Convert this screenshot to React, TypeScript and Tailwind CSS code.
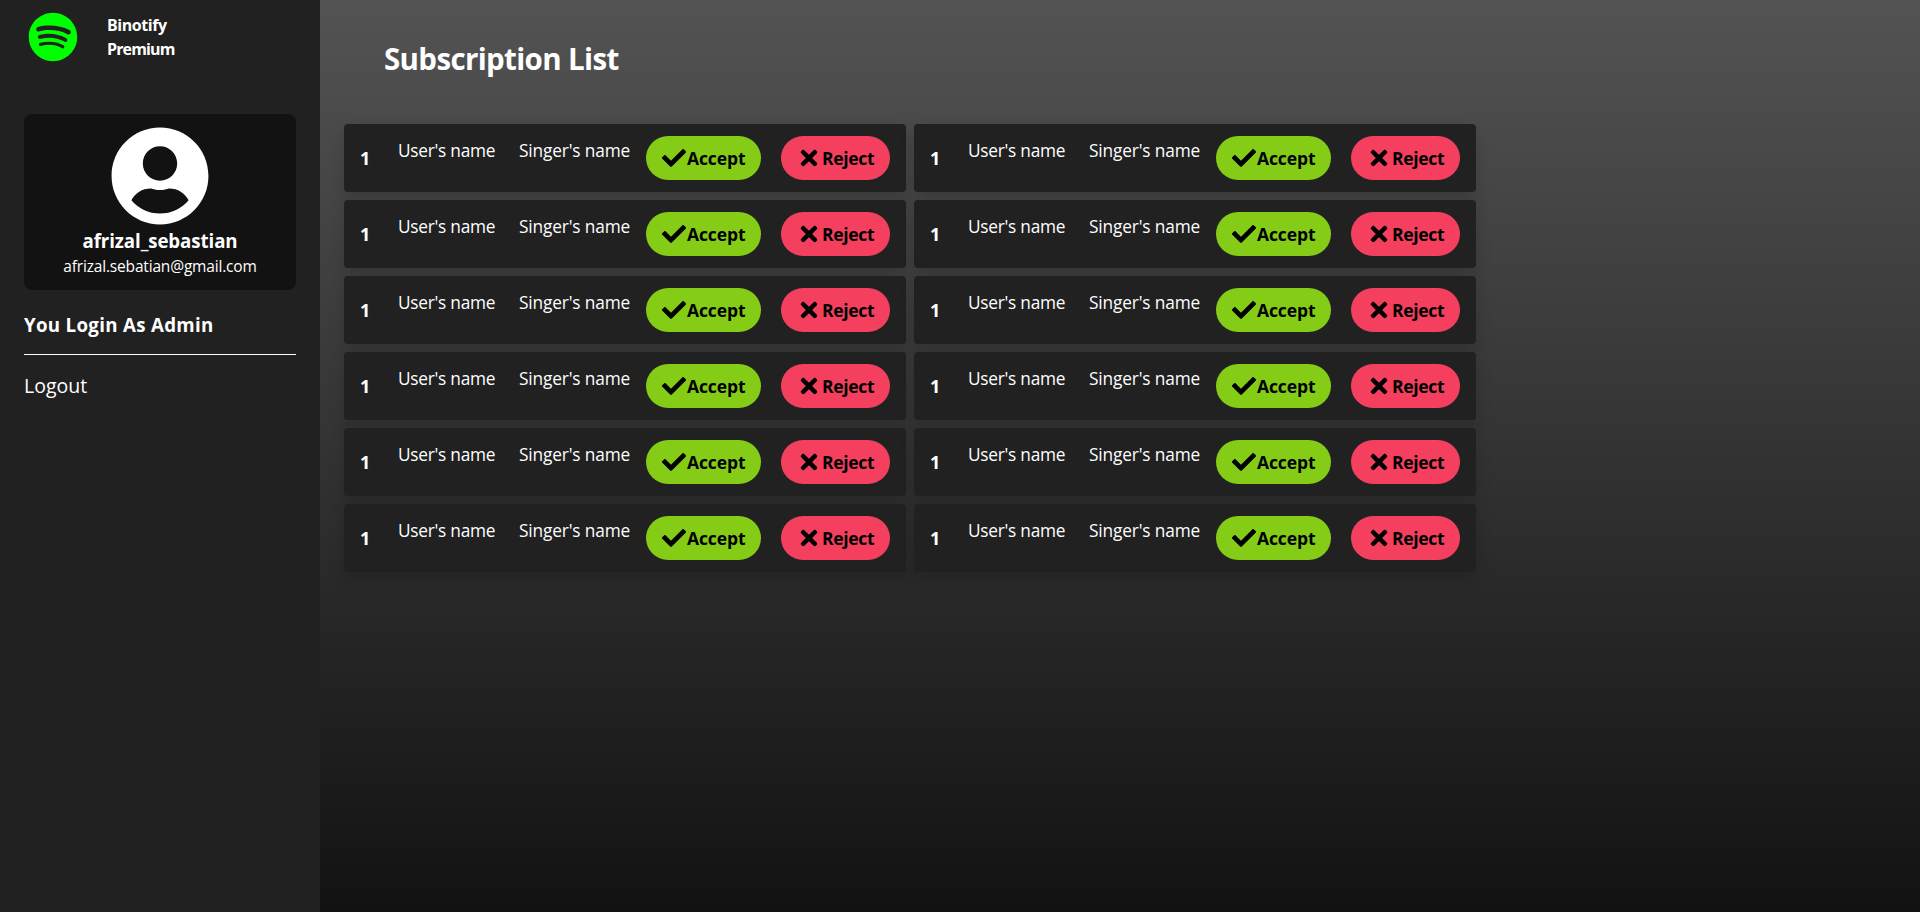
import { FaCheck, FaSpotify, FaTimes, FaUserCircle } from 'react-icons/fa';

interface Subscription {
  id: number;
  number: number;
  user: string;
  singer: string;
}

const subscriptions: Subscription[] = Array.from({ length: 12 }, (_, id) => ({
  id,
  number: 1,
  user: "User's name",
  singer: "Singer's name",
}));

function Sidebar() {
  return (
    <aside className="flex w-80 shrink-0 flex-col bg-[#212121] px-6 pt-3">
      <div className="flex items-start gap-[29px] pl-1">
        <FaSpotify className="size-[50px] text-[#00ff00]" />
        <div className="flex flex-col pt-px text-base leading-6 font-bold">
          <span className="tracking-[-0.45px]">Binotify</span>
          <span className="tracking-[-0.85px]">Premium</span>
        </div>
      </div>
      <section className="mt-[52px] flex h-44 flex-col items-center rounded-lg bg-[#121212] p-3">
        <FaUserCircle className="size-[100px]" />
        <p className="pt-px text-[18.72px] leading-[27px] font-bold tracking-[-0.1px]">afrizal_sebastian</p>
        <p className="text-[15.5px] leading-6 tracking-[-0.18px]">afrizal.sebatian@gmail.com</p>
      </section>
      <h2 className="mt-[21px] text-[18.72px] leading-[27px] font-bold tracking-[0.3px]">You Login As Admin</h2>
      <hr className="mt-4 border-white" />
      <a className="mt-[17px] text-[19.5px] leading-7">Logout</a>
    </aside>
  );
}

function SubscriptionCard({ subscription }: { subscription: Subscription }) {
  return (
    <article className="flex h-[68px] items-start rounded bg-[#212121] py-3 pl-4 shadow-[0_8px_16px_rgba(0,0,0,0.15)]">
      <span className="w-[38px] self-center text-lg leading-7 font-bold">{subscription.number}</span>
      <span className="w-[121px] text-[17.3px] leading-[30px] tracking-[-0.26px]">{subscription.user}</span>
      <span className="w-[127px] text-[17.3px] leading-[30px] tracking-[-0.15px]">{subscription.singer}</span>
      <button className="flex h-11 w-[115px] items-center gap-px rounded-full bg-[#84cc16] pl-4 text-[17.5px] leading-7 font-bold tracking-[-0.1px] text-black">
        <FaCheck className="size-6" />
        Accept
      </button>
      <button className="ml-5 flex h-11 w-[109px] items-center gap-px rounded-full bg-[#f43f5e] pl-4 text-[17.5px] leading-7 font-bold tracking-[-0.3px] text-black">
        <FaTimes className="size-6" />
        Reject
      </button>
    </article>
  );
}

export default function App() {
  return (
    <div className="flex h-screen overflow-hidden bg-[#212121] font-['Open_Sans',sans-serif] text-white">
      <Sidebar />
      <main className="flex flex-1 flex-col bg-linear-to-b/srgb from-[#535353] to-[#121212] pl-6">
        <h1 className="mt-[41px] pl-10 text-[29.5px] leading-9 font-bold tracking-[-0.64px]">Subscription List</h1>
        <div className="mt-[47px] grid w-[1132px] grid-cols-2 gap-2">
          {subscriptions.map((subscription) => (
            <SubscriptionCard key={subscription.id} subscription={subscription} />
          ))}
        </div>
      </main>
    </div>
  );
}
